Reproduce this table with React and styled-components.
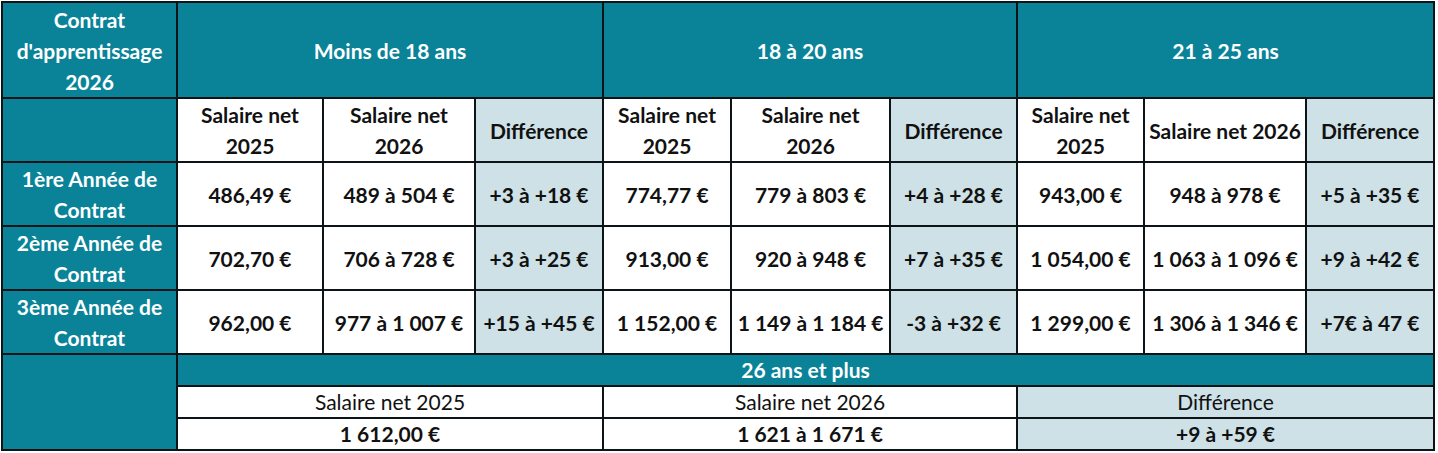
import React from "react";
import styled, { createGlobalStyle } from "styled-components";

const GlobalStyle = createGlobalStyle`
  body {
    margin: 0;
    padding: 1px;
    background: #ffffff;
  }
`;

const Table = styled.table`
  border-collapse: collapse;
  table-layout: fixed;
  width: 1434px;
  font-family: Lato, "Liberation Sans", sans-serif;
  font-size: 21px;
  color: #111111;
`;

const Row = styled.tr`
  height: ${(p) => p.h}px;
`;

const bgFor = (tone) =>
  tone === "teal" ? "#0a8398" : tone === "light" ? "#cde1e7" : "#ffffff";

const Cell = styled.td`
  border: 2px solid #0d1417;
  padding: 0;
  text-align: center;
  vertical-align: middle;
  font-weight: ${(p) => (p.$normal ? 400 : 700)};
  background: ${(p) => bgFor(p.$tone)};
  color: ${(p) => (p.$tone === "teal" ? "#ffffff" : "#111111")};
  white-space: pre;
  line-height: ${(p) => (p.$tight ? "26px" : "31px")};
  overflow: hidden;
`;

const widths = [175, 146, 152, 128, 128, 159, 127, 127, 162, 128];

const rows = [
  ["1ère Année de\nContrat", "486,49 €", "489 à 504 €", "+3 à +18 €", "774,77 €", "779 à 803 €", "+4 à +28 €", "943,00 €", "948 à 978 €", "+5 à +35 €"],
  ["2ème Année de\nContrat", "702,70 €", "706 à 728 €", "+3 à +25 €", "913,00 €", "920 à 948 €", "+7 à +35 €", "1 054,00 €", "1 063 à 1 096 €", "+9 à +42 €"],
  ["3ème Année de\nContrat", "962,00 €", "977 à 1 007 €", "+15 à +45 €", "1 152,00 €", "1 149 à 1 184 €", "-3 à +32 €", "1 299,00 €", "1 306 à 1 346 €", "+7€ à 47 €"],
];

const subHeads = [
  "Salaire net\n2025",
  "Salaire net\n2026",
  "Différence",
  "Salaire net\n2025",
  "Salaire net\n2026",
  "Différence",
  "Salaire net\n2025",
  "Salaire net 2026",
  "Différence",
];

const toneOf = (i) => (i % 3 === 2 ? "light" : "white");

export default function App() {
  return (
    <>
      <GlobalStyle />
      <Table>
        <colgroup>
          {widths.map((w, i) => (
            <col key={i} style={{ width: w }} />
          ))}
        </colgroup>
        <tbody>
          <Row h={96}>
            <Cell $tone="teal">{"Contrat\nd'apprentissage\n2026"}</Cell>
            <Cell $tone="teal" colSpan={3}>Moins de 18 ans</Cell>
            <Cell $tone="teal" colSpan={3}>18 à 20 ans</Cell>
            <Cell $tone="teal" colSpan={3}>21 à 25 ans</Cell>
          </Row>
          <Row h={64}>
            <Cell $tone="teal" />
            {subHeads.map((t, i) => (
              <Cell key={i} $tone={toneOf(i)}>
                {t}
              </Cell>
            ))}
          </Row>
          {rows.map((r, ri) => (
            <Row h={64} key={ri}>
              <Cell $tone="teal">{r[0]}</Cell>
              {r.slice(1).map((v, i) => (
                <Cell key={i} $tone={toneOf(i)}>
                  {v}
                </Cell>
              ))}
            </Row>
          ))}
          <Row h={32}>
            <Cell $tone="teal" rowSpan={3} />
            <Cell $tone="teal" colSpan={9} $tight>
              26 ans et plus
            </Cell>
          </Row>
          <Row h={32}>
            <Cell colSpan={3} $normal $tight>Salaire net 2025</Cell>
            <Cell colSpan={3} $normal $tight>Salaire net 2026</Cell>
            <Cell colSpan={3} $tone="light" $normal $tight>Différence</Cell>
          </Row>
          <Row h={32}>
            <Cell colSpan={3} $tight>1 612,00 €</Cell>
            <Cell colSpan={3} $tight>1 621 à 1 671 €</Cell>
            <Cell colSpan={3} $tone="light" $tight>+9 à +59 €</Cell>
          </Row>
        </tbody>
      </Table>
    </>
  );
}
